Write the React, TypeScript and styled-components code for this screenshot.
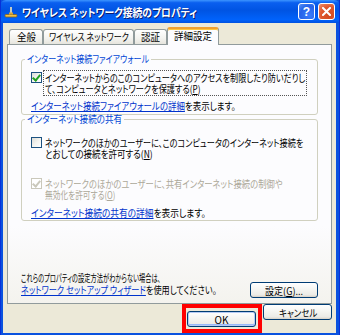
import { useLayoutEffect, useRef, useState, type ReactNode } from "react";
import styled, { createGlobalStyle, css } from "styled-components";

const GlobalStyle = createGlobalStyle`
  html, body {
    margin: 0;
    padding: 0;
    background: #ffffff;
  }
  body {
    font-family: "Noto Sans CJK JP", "Noto Sans", sans-serif;
    font-feature-settings: "palt";
  }
`;

// squeezes a line of text to the width it has in the screenshot (the
// original font is much narrower than anything installed here)
function Fit({ w, children }: { w: number; children: ReactNode }) {
  const ref = useRef<HTMLSpanElement>(null);
  const [scale, setScale] = useState(1);

  useLayoutEffect(() => {
    const measure = () => {
      const el = ref.current;
      if (!el) return;
      const natural = el.offsetWidth;
      if (natural > 0) setScale(w / natural);
    };
    measure();
    document.fonts?.ready.then(measure);
  }, [w]);

  return (
    <FitBox style={{ width: w }}>
      <FitInner ref={ref} style={{ transform: `scaleX(${scale})` }}>
        {children}
      </FitInner>
    </FitBox>
  );
}

export default function App() {
  return (
    <>
      <GlobalStyle />
      <Window>
        <TitleBar>
          <TitleIcon />
          <Title>
            <Fit w={175}>ワイヤレス ネットワーク接続のプロパティ</Fit>
          </Title>
          <CaptionButton $kind="help">?</CaptionButton>
          <CaptionButton $kind="close">
            <svg width="9" height="9" viewBox="0 0 9 9">
              <path d="M1 1 L8 8 M8 1 L1 8" stroke="#fff" strokeWidth="2" strokeLinecap="square" />
            </svg>
          </CaptionButton>
        </TitleBar>
        <Client>
          <Tabs>
            <Tab $w={34}>
              <Fit w={19}>全般</Fit>
            </Tab>
            <Tab $w={91}>
              <Fit w={80}>ワイヤレス ネットワーク</Fit>
            </Tab>
            <Tab $w={33}>
              <Fit w={19}>認証</Fit>
            </Tab>
            <Tab $w={52} $active>
              <Fit w={38}>詳細設定</Fit>
            </Tab>
          </Tabs>
          <Panel>
            <Group $pad="5px 8px 2px 9px">
              <Legend>
                <Fit w={122}>インターネット接続ファイアウォール</Fit>
              </Legend>
              <CheckRow>
                <CheckBox $checked />
                <Label $focused>
                  <Fit w={260}>インターネットからのこのコンピュータへのアクセスを制限したり防いだりし</Fit>
                  <Fit w={155}>
                    て、コンピュータとネットワークを保護する(<u>P</u>)
                  </Fit>
                </Label>
              </CheckRow>
              <InfoLine $top={4}>
                <Fit w={205}>
                  <Link>インターネット接続ファイアウォールの詳細</Link>を表示します。
                </Fit>
              </InfoLine>
            </Group>
            <Group $pad="10px 8px 1px 9px" $top={-2}>
              <Legend>
                <Fit w={95}>インターネット接続の共有</Fit>
              </Legend>
              <CheckRow>
                <CheckBox />
                <Label>
                  <Fit w={258}>ネットワークのほかのユーザーに、このコンピュータのインターネット接続を</Fit>
                  <Fit w={108}>
                    とおしての接続を許可する(<u>N</u>)
                  </Fit>
                </Label>
              </CheckRow>
              <CheckRow $top={15}>
                <CheckBox $checked $disabled />
                <Label $disabled>
                  <Fit w={238}>ネットワークのほかのユーザーに、共有インターネット接続の制御や</Fit>
                  <Fit w={70}>
                    無効化を許可する(<u>O</u>)
                  </Fit>
                </Label>
              </CheckRow>
              <InfoLine $top={5}>
                <Fit w={175}>
                  <Link>インターネット接続の共有の詳細</Link>を表示します。
                </Fit>
              </InfoLine>
            </Group>
            <Footer>
              <FooterText>
                <Fit w={140}>これらのプロパティの設定方法がわからない場合は、</Fit>
                <Fit w={196}>
                  <Link>ネットワーク セットアップ ウィザード</Link>を使用してください。
                </Fit>
              </FooterText>
              <Button $width={68}>
                <Fit w={38}>
                  設定(<u>G</u>)...
                </Fit>
              </Button>
            </Footer>
          </Panel>
          <ButtonRow>
            <Highlight>
              <Button $width={69} $default>
                OK
              </Button>
            </Highlight>
            <Button $width={69}>
              <Fit w={38}>キャンセル</Fit>
            </Button>
          </ButtonRow>
        </Client>
      </Window>
    </>
  );
}

function TitleIcon() {
  return (
    <svg width="14" height="14" viewBox="0 0 14 14">
      <path d="M7 2 L7 9" stroke="#f4e9b8" strokeWidth="1.6" />
      <rect x="1" y="9.5" width="12" height="2.5" rx="1" fill="#f1c24a" stroke="#8a6414" strokeWidth="0.8" />
      <rect x="5" y="7.5" width="4" height="2" fill="#d8a53a" />
    </svg>
  );
}

const FitBox = styled.span`
  display: block;
  white-space: nowrap;
`;

const FitInner = styled.span`
  display: inline-block;
  transform-origin: 0 50%;
`;

const Window = styled.div`
  width: 340px;
  height: 335px;
  box-sizing: border-box;
  display: flex;
  flex-direction: column;
  background: #0a52df;
  padding: 0 3px 2px 2px;
  border-left: 1px solid #0831d9;
  border-right: 1px solid #0831d9;
  overflow: hidden;
`;

const TitleBar = styled.div`
  height: 23px;
  margin: 0 -4px 0 -3px;
  display: flex;
  align-items: center;
  padding: 0 5px 0 4px;
  gap: 2px;
  background: linear-gradient(
    to bottom,
    #3d95ff 0%,
    #0a5fef 12%,
    #0054e3 45%,
    #0062fb 85%,
    #0051e0 100%
  );
  border-radius: 6px 6px 0 0;
`;

const Title = styled.div`
  flex: 1;
  color: #ffffff;
  font-size: 11px;
  font-weight: bold;
  padding-left: 2px;
  text-shadow: 1px 1px 0 #0a1b6f;
`;

const CaptionButton = styled.div<{ $kind: "help" | "close" }>`
  width: 15px;
  height: 15px;
  border: 1px solid #ffffff;
  border-radius: 3px;
  display: flex;
  align-items: center;
  justify-content: center;
  color: #ffffff;
  font-family: "Liberation Sans", Arial, sans-serif;
  font-weight: bold;
  font-size: 12px;
  margin-left: 1px;
  ${(p) =>
    p.$kind === "help"
      ? css`
          background: radial-gradient(circle at 70% 75%, #3b7dfb 0%, #2663e9 60%, #5b95f7 100%);
        `
      : css`
          background: radial-gradient(circle at 70% 75%, #d0481f 0%, #e0582e 55%, #f0916f 100%);
        `}
`;

const Client = styled.div`
  flex: 1;
  display: flex;
  flex-direction: column;
  background: #ece9d8;
  padding: 4px 4px 0 4px;
`;

const Tabs = styled.div`
  display: flex;
  align-items: flex-end;
  padding-left: 2px;
  height: 17px;
  position: relative;
  z-index: 1;
`;

const Tab = styled.div<{ $w: number; $active?: boolean }>`
  width: ${(p) => p.$w}px;
  height: 15px;
  box-sizing: border-box;
  display: flex;
  justify-content: center;
  font-size: 10px;
  line-height: 14px;
  color: #000000;
  border: 1px solid #919b9c;
  border-bottom: none;
  border-radius: 3px 3px 0 0;
  background: linear-gradient(to bottom, #ffffff, #f3f3ef 60%, #e6e5dd);
  ${(p) =>
    p.$active &&
    css`
      height: 18px;
      margin-bottom: -1px;
      line-height: 14px;
      background: #fcfcfe;
      border-top: 2px solid #f1a130;
      box-shadow: inset 0 1px 0 #ffc83c;
    `}
`;

const Panel = styled.div`
  height: 260px;
  box-sizing: border-box;
  display: flex;
  flex-direction: column;
  border: 1px solid #919b9c;
  background: linear-gradient(to bottom, #fcfcfe 0%, #fcfcfe 70%, #f4f3ee 100%);
  padding: 8px 13px 5px 13px;
`;

const Group = styled.fieldset<{ $pad: string; $top?: number }>`
  margin: ${(p) => p.$top ?? 0}px 0 0 0;
  border: 1px solid #d0d0bf;
  border-radius: 3px;
  padding: ${(p) => p.$pad};
  min-width: 0;
`;

const Legend = styled.legend`
  color: #0046d5;
  font-size: 10px;
  line-height: 12px;
  padding: 0 2px;
  margin-left: -6px;
`;

const CheckRow = styled.div<{ $top?: number }>`
  display: flex;
  align-items: flex-start;
  gap: 1px;
  margin-top: ${(p) => p.$top ?? 0}px;
`;

const CheckBox = styled.div<{ $checked?: boolean; $disabled?: boolean }>`
  width: 11px;
  height: 11px;
  flex: none;
  box-sizing: border-box;
  margin-top: 2px;
  border: 1px solid ${(p) => (p.$disabled ? "#cac8bb" : "#1c5180")};
  background: ${(p) =>
    p.$disabled ? "#ffffff" : "linear-gradient(135deg, #dcdcd7 0%, #f3f3ef 50%, #ffffff 100%)"};
  position: relative;
  ${(p) =>
    p.$checked &&
    css`
      &::after {
        content: "";
        position: absolute;
        left: 2px;
        top: 0px;
        width: 3px;
        height: 6px;
        border: solid ${p.$disabled ? "#cac8bb" : "#21a121"};
        border-width: 0 2px 2px 0;
        transform: rotate(40deg);
      }
    `}
`;

const Label = styled.div<{ $focused?: boolean; $disabled?: boolean }>`
  font-size: 10px;
  line-height: 11px;
  color: ${(p) => (p.$disabled ? "#aca899" : "#000000")};
  padding: 1px 1px 1px 1px;
  border: 1px dotted ${(p) => (p.$focused ? "#555555" : "transparent")};
`;

const InfoLine = styled.div<{ $top?: number }>`
  font-size: 10px;
  line-height: 12px;
  color: #000000;
  margin-top: ${(p) => p.$top ?? 0}px;
`;

const Link = styled.span`
  color: #0033cc;
  text-decoration: underline;
`;

const Footer = styled.div`
  margin-top: auto;
  display: flex;
  align-items: flex-end;
  justify-content: space-between;
`;

const FooterText = styled.div`
  font-size: 10px;
  line-height: 12px;
  color: #000000;
  margin-bottom: 2px;
`;

const Button = styled.div<{ $width: number; $default?: boolean }>`
  width: ${(p) => p.$width}px;
  height: 16px;
  box-sizing: border-box;
  flex: none;
  display: flex;
  align-items: center;
  justify-content: center;
  font-size: 10px;
  color: #000000;
  border: 1px solid #003c74;
  border-radius: 3px;
  background: linear-gradient(to bottom, #ffffff 0%, #f4f4f0 50%, #ecebe6 85%, #d6d0c5 100%);
  ${(p) =>
    p.$default &&
    css`
      box-shadow: inset 0 0 0 1px #b6cbf4, inset 0 -1px 0 1px #98b8f8;
    `}
`;

const ButtonRow = styled.div`
  display: flex;
  justify-content: flex-end;
  align-items: flex-start;
  gap: 1px;
  height: 29px;
`;

const Highlight = styled.div`
  border: 4px solid #ff0000;
  padding: 3px 2px 2px 1px;
  background: #ece9d8;
`;
